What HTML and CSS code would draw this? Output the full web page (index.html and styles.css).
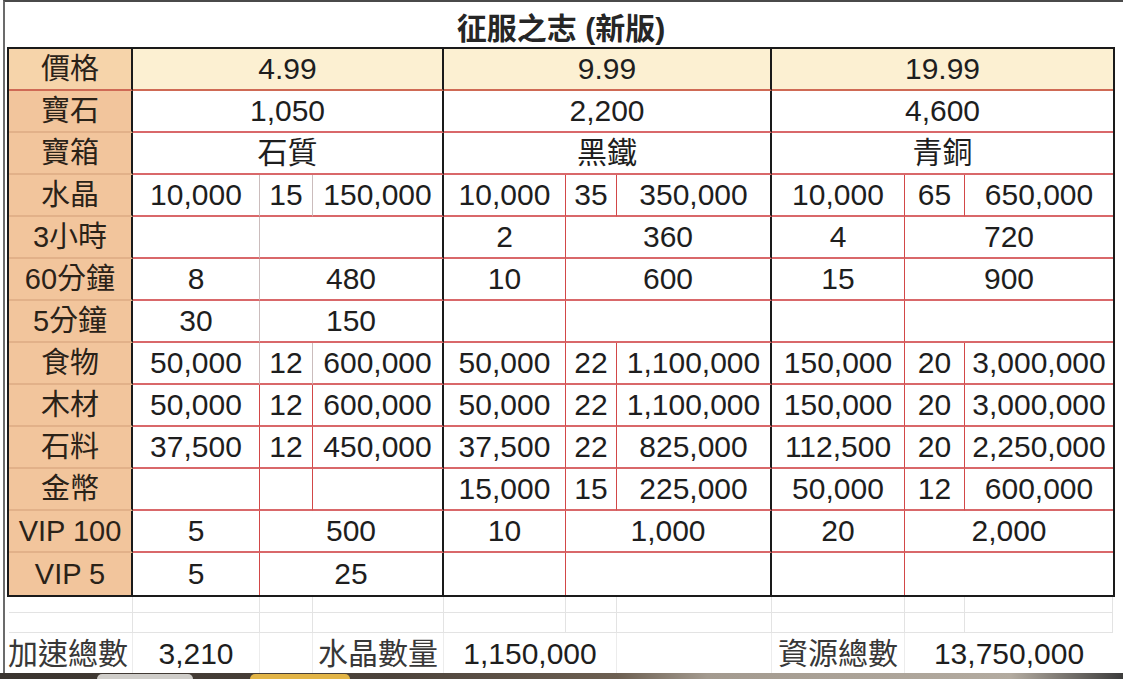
FILE: index.html
```html
<!DOCTYPE html>
<html lang="zh-Hant">
<head>
<meta charset="utf-8">
<title>征服之志 (新版)</title>
<link rel="stylesheet" href="styles.css">
</head>
<body>
<div class="screen">
  <div class="sheet">
    <div class="title">征服之志 (新版)</div>

    <div class="table">
      <!-- 價格 -->
      <div class="c lab lab-price">價格</div>
      <div class="c price s3 end">4.99</div>
      <div class="c price s3 end">9.99</div>
      <div class="c price s3">19.99</div>
      <!-- 寶石 -->
      <div class="c lab">寶石</div>
      <div class="c s3 end">1,050</div>
      <div class="c s3 end">2,200</div>
      <div class="c s3">4,600</div>
      <!-- 寶箱 -->
      <div class="c lab">寶箱</div>
      <div class="c s3 end">石質</div>
      <div class="c s3 end">黑鐵</div>
      <div class="c s3">青銅</div>
      <!-- 水晶 -->
      <div class="c lab">水晶</div>
      <div class="c vg">10,000</div><div class="c vg">15</div><div class="c end">150,000</div>
      <div class="c v">10,000</div><div class="c v">35</div><div class="c end">350,000</div>
      <div class="c v">10,000</div><div class="c v">65</div><div class="c">650,000</div>
      <!-- 3小時 -->
      <div class="c lab">3小時</div>
      <div class="c vg"></div><div class="c s2 end"></div>
      <div class="c v">2</div><div class="c s2 end">360</div>
      <div class="c v">4</div><div class="c s2">720</div>
      <!-- 60分鐘 -->
      <div class="c lab">60分鐘</div>
      <div class="c vg">8</div><div class="c s2 end">480</div>
      <div class="c v">10</div><div class="c s2 end">600</div>
      <div class="c v">15</div><div class="c s2">900</div>
      <!-- 5分鐘 -->
      <div class="c lab">5分鐘</div>
      <div class="c vg">30</div><div class="c s2 end">150</div>
      <div class="c v"></div><div class="c s2 end"></div>
      <div class="c v"></div><div class="c s2"></div>
      <!-- 食物 -->
      <div class="c lab">食物</div>
      <div class="c vg">50,000</div><div class="c vg">12</div><div class="c end">600,000</div>
      <div class="c v">50,000</div><div class="c v">22</div><div class="c end">1,100,000</div>
      <div class="c v">150,000</div><div class="c v">20</div><div class="c">3,000,000</div>
      <!-- 木材 -->
      <div class="c lab">木材</div>
      <div class="c v">50,000</div><div class="c v">12</div><div class="c end">600,000</div>
      <div class="c v">50,000</div><div class="c v">22</div><div class="c end">1,100,000</div>
      <div class="c v">150,000</div><div class="c v">20</div><div class="c">3,000,000</div>
      <!-- 石料 -->
      <div class="c lab">石料</div>
      <div class="c v">37,500</div><div class="c v">12</div><div class="c end">450,000</div>
      <div class="c v">37,500</div><div class="c v">22</div><div class="c end">825,000</div>
      <div class="c v">112,500</div><div class="c v">20</div><div class="c">2,250,000</div>
      <!-- 金幣 -->
      <div class="c lab">金幣</div>
      <div class="c v"></div><div class="c v"></div><div class="c end"></div>
      <div class="c v">15,000</div><div class="c v">15</div><div class="c end">225,000</div>
      <div class="c v">50,000</div><div class="c v">12</div><div class="c">600,000</div>
      <!-- VIP 100 -->
      <div class="c lab">VIP 100</div>
      <div class="c v">5</div><div class="c s2 end">500</div>
      <div class="c v">10</div><div class="c s2 end">1,000</div>
      <div class="c v">20</div><div class="c s2">2,000</div>
      <!-- VIP 5 -->
      <div class="c lab last">VIP 5</div>
      <div class="c v last">5</div><div class="c s2 end last">25</div>
      <div class="c v last"></div><div class="c s2 end last"></div>
      <div class="c v last"></div><div class="c s2 last"></div>
    </div>

    <div class="blank">
      <div class="b"></div><div class="b"></div><div class="b"></div><div class="b"></div><div class="b"></div>
      <div class="b"></div><div class="b"></div><div class="b"></div><div class="b"></div><div class="b"></div>
      <div class="b r2"></div><div class="b r2"></div><div class="b r2"></div><div class="b r2"></div><div class="b r2"></div>
      <div class="b r2"></div><div class="b r2"></div><div class="b r2"></div><div class="b r2"></div><div class="b r2"></div>
    </div>

    <div class="footer">
      <div class="f f-label">加速總數</div>
      <div class="f fl">3,210</div>
      <div class="f fl"></div>
      <div class="f f-label-c fl">水晶數量</div>
      <div class="f s2 fl">1,150,000</div>
      <div class="f fl"></div>
      <div class="f f-label-c fl">資源總數</div>
      <div class="f s2">13,750,000</div>
    </div>
  </div>

  <div class="taskbar">
    <span class="blob blob-grey"></span>
    <span class="blob blob-yellow"></span>
  </div>
</div>
</body>
</html>
```

FILE: styles.css
```css
* {
  box-sizing: border-box;
}

html,
body {
  margin: 0;
  padding: 0;
}

body {
  width: 1123px;
  height: 679px;
  overflow: hidden;
  background: #ffffff;
  font-family: "Liberation Sans", "Noto Sans CJK TC", sans-serif;
  color: #1c1c1c;
}

.screen {
  display: flex;
  flex-direction: column;
  height: 679px;
}

.sheet {
  flex: 1;
  display: flex;
  flex-direction: column;
  margin-left: 3px;
  border-left: 2px solid #6b6b6b;
  border-top: 2px solid #4a4a4a;
  padding-left: 2px;
}

.title {
  height: 45px;
  width: 1108px;
  display: flex;
  align-items: center;
  justify-content: center;
  font-size: 30px;
  font-weight: bold;
  color: #262626;
  padding-top: 2px;
}

.table {
  display: grid;
  width: 1108px;
  grid-template-columns: 124px 127px 53px 131px 122px 51px 155px 133px 60px 148px;
  grid-auto-rows: 42px;
  border: 2px solid #1a1a1a;
}

.c {
  display: flex;
  align-items: center;
  justify-content: center;
  font-size: 30px;
  line-height: 1;
  white-space: nowrap;
  border-bottom: 2px solid #d9686a;
  background: #ffffff;
  color: #1e1e1e;
}

.c.last {
  border-bottom: none;
}

.s2 {
  grid-column: span 2;
}

.s3 {
  grid-column: span 3;
}

.v {
  border-right: 1px solid #d24848;
}

.vg {
  border-right: 1px solid #cbbcbc;
}

.end {
  border-right: 2px solid #1a1a1a;
}

.lab {
  background: #f2c59c;
  border-right: 2px solid #1a1a1a;
  border-bottom: 2px solid #e2b189;
  color: #2a2218;
  font-size: 29px;
}

.lab-price {
  background: #f6d4aa;
  border-bottom-color: #cf6a55;
}

.price {
  background: #fcf0d2;
  border-bottom-color: #cf6a55;
}

.blank {
  display: grid;
  width: 1108px;
  padding-left: 2px;
  grid-template-columns: 124px 127px 53px 131px 122px 51px 155px 133px 60px 148px;
  grid-template-rows: 16px 20px;
}

.b {
  border-right: 1px solid #e3e3e3;
  border-bottom: 1px solid #e3e3e3;
}

.footer {
  display: grid;
  width: 1108px;
  height: 40px;
  padding-left: 2px;
  grid-template-columns: 124px 127px 53px 131px 122px 51px 155px 133px 60px 148px;
}

.f {
  display: flex;
  align-items: center;
  justify-content: center;
  font-size: 30px;
  line-height: 1;
  white-space: nowrap;
  color: #1e1e1e;
  padding-top: 2px;
}

.fl {
  border-right: 1px solid #ececec;
}

.f-label {
  justify-content: flex-start;
  margin-left: -1px;
  color: #383838;
  border-right: 1px solid #ececec;
}

.f-label-c {
  color: #383838;
}

.taskbar {
  height: 6px;
  display: flex;
  align-items: flex-end;
  background: linear-gradient(to right, #3a342f 0%, #4c433b 35%, #6d6052 55%, #a39a8f 63%, #b3aba0 90%, #3c3c3c 100%);
}

.blob {
  display: block;
  height: 5px;
  border-radius: 6px 6px 0 0;
}

.blob-grey {
  width: 96px;
  margin-left: 97px;
  background: #cfcdc9;
}

.blob-yellow {
  width: 100px;
  margin-left: 57px;
  background: #e2b446;
}
```
